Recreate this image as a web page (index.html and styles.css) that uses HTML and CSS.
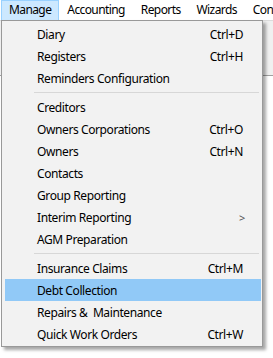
FILE: index.html
```html
<!DOCTYPE html>
<html lang="en">

<head>
    <meta charset="UTF-8">
    <title>Manage menu</title>
    <link rel="stylesheet" href="styles.css">
</head>

<body>
    <div class="window">
        <ul class="menubar">
            <li class="bar-item open">Manage</li>
            <li class="bar-item">Accounting</li>
            <li class="bar-item">Reports</li>
            <li class="bar-item">Wizards</li>
            <li class="bar-item">Contacts</li>
        </ul>
        <div class="toolbar"></div>
        <div class="content"></div>

        <ul class="dropdown">
            <li class="menu-item"><span class="label">Diary</span><span class="key">Ctrl+D</span></li>
            <li class="menu-item"><span class="label">Registers</span><span class="key">Ctrl+H</span></li>
            <li class="menu-item"><span class="label">Reminders Configuration</span></li>
            <li class="sep"></li>
            <li class="menu-item"><span class="label">Creditors</span></li>
            <li class="menu-item"><span class="label">Owners Corporations</span><span class="key">Ctrl+O</span></li>
            <li class="menu-item"><span class="label">Owners</span><span class="key">Ctrl+N</span></li>
            <li class="menu-item"><span class="label">Contacts</span></li>
            <li class="menu-item"><span class="label">Group Reporting</span></li>
            <li class="menu-item"><span class="label">Interim Reporting</span><span class="arrow">&gt;</span></li>
            <li class="menu-item"><span class="label">AGM Preparation</span></li>
            <li class="sep"></li>
            <li class="menu-item"><span class="label">Insurance Claims</span><span class="key">Ctrl+M</span></li>
            <li class="menu-item hover"><span class="label">Debt Collection</span></li>
            <li class="menu-item"><span class="label">Repairs &amp;&nbsp; Maintenance</span></li>
            <li class="menu-item"><span class="label">Quick Work Orders</span><span class="key">Ctrl+W</span></li>
        </ul>
    </div>
</body>

</html>
```

FILE: styles.css
```css
* {
    margin: 0;
    padding: 0;
    box-sizing: border-box;
}

body {
    background-color: #fff;
    font-family: "Noto Sans", "Open Sans", sans-serif;
    font-size: 12px;
    letter-spacing: -0.4px;
    color: #000;
    overflow: hidden;
}

li {
    list-style: none;
}

.window {
    position: relative;
    width: 273px;
    height: 358px;
    overflow: hidden;
}

/* menu bar */
.menubar {
    display: flex;
    height: 20px;
    padding-left: 1px;
    background-color: #fff;
    white-space: nowrap;
    overflow: hidden;
    letter-spacing: -0.6px;
}

.bar-item {
    height: 20px;
    line-height: 18px;
    padding: 0 7px;
    border: 1px solid transparent;
    border-bottom: none;
}

.bar-item.open {
    background-color: #cce8ff;
    border-color: #99d1ff;
}

.toolbar {
    height: 56px;
    background-color: #f0f0f0;
    border-top: 1px solid #dcdcdc;
    border-bottom: 1px solid #a0a0a0;
}

.content {
    height: 282px;
    background-color: #fff;
}

/* dropdown */
.dropdown {
    position: absolute;
    left: 1px;
    top: 20px;
    width: 262px;
    padding: 2px 0 1px;
    background-color: #f2f2f2;
    border: 1px solid #999;
    box-shadow: 3px 3px 3px rgba(0, 0, 0, 0.35);
}

.menu-item {
    display: flex;
    align-items: center;
    height: 22px;
    margin: 0 1px 0 3px;
    padding: 0 18px 0 32px;
}

.menu-item .label {
    flex: 1;
    white-space: nowrap;
}

.menu-item .key {
    white-space: nowrap;
}

.menu-item .arrow {
    color: #555;
    font-size: 11px;
    margin-right: -2px;
}

.menu-item.hover {
    background-color: #91c9f7;
}

.sep {
    height: 7px;
    margin-left: 32px;
    margin-right: 3px;
    border-top: 3px solid transparent;
    background: linear-gradient(#d7d7d7, #d7d7d7) no-repeat 0 0 / 100% 1px;
}
```
